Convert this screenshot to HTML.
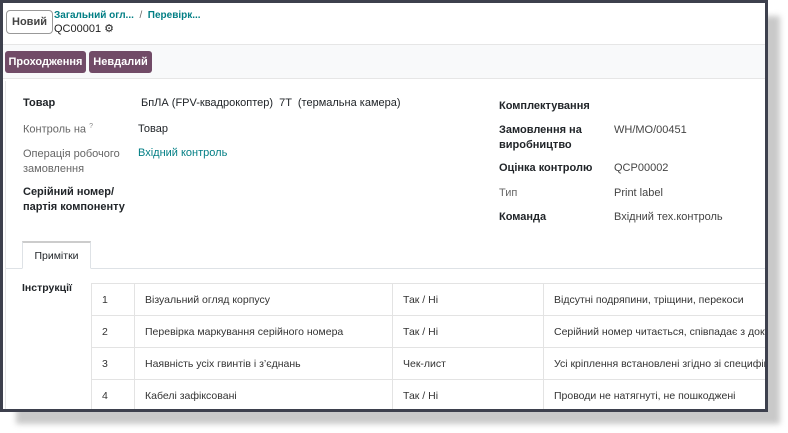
<!DOCTYPE html>
<html><head><meta charset="utf-8"><style>
*{box-sizing:border-box;margin:0;padding:0}
body{width:788px;height:433px;background:#fff;font-family:"Liberation Sans","Noto Sans CJK SC",sans-serif;font-size:11px;color:#212529;position:relative;overflow:hidden}
.shadow{position:absolute;left:16px;top:16px;width:764px;height:408px;background:#c9c9c9;filter:blur(3px)}
.frame{position:absolute;left:0;top:0;width:768px;height:412px;border:3px solid #3d404d;background:#fff;overflow:hidden}
.abs{position:absolute;white-space:nowrap}
.btn{position:absolute;background:#714b67;color:#fff;border-radius:3px;font-size:11px;font-weight:bold;line-height:22px;text-align:center}
.lbl{font-weight:bold;color:#212529}
.mut{color:#666}
.link{color:#017e84}
table{position:absolute;left:88px;top:280px;border-collapse:collapse;table-layout:fixed;width:700px}
td{border:1px solid #e3e3e3;height:32px;padding:0 10px;font-size:10.5px;color:#333;white-space:nowrap;overflow:hidden}
</style></head><body>
<div class="shadow"></div>
<div class="frame">
 <div class="abs" style="left:3px;top:7px;width:47px;height:24px;border:1px solid #999;border-radius:4px;text-align:center;line-height:22px;font-size:11px;color:#444;background:#fff;font-weight:bold">Новий</div>
 <div class="abs link" style="left:51px;top:7px;font-size:10px;font-weight:bold">Загальний огл... &nbsp;<span style="color:#666;font-weight:normal">/</span>&nbsp; Перевірк...</div>
 <div class="abs" style="left:51px;top:19px;font-size:11px;color:#222">QC00001 <span style="font-size:11px">⚙</span></div>
 <div class="abs" style="left:0;top:41px;width:770px;height:35px;background:#f8f9fa;border-top:1px solid #e6e6e6;border-bottom:1px solid #e6e6e6"></div>
 <div class="btn" style="left:2px;top:48px;width:81px">Проходження</div>
 <div class="btn" style="left:86px;top:48px;width:63px">Невдалий</div>
 <div class="abs" style="left:2px;top:78px;width:770px;height:340px;border-left:1px solid #e6e6e6"></div>
 <div class="abs lbl" style="left:20px;top:94px">Товар</div>
 <div class="abs" style="left:138px;top:94px">БпЛА (FPV-квадрокоптер) &nbsp;7T &nbsp;(термальна камера)</div>
 <div class="abs mut" style="left:20px;top:120px">Контроль на <sup style="font-size:7px;color:#888">?</sup></div>
 <div class="abs" style="left:135px;top:120px">Товар</div>
 <div class="abs mut" style="left:20px;top:144px;line-height:15px">Операція робочого<br>замовлення</div>
 <div class="abs link" style="left:135px;top:144px">Вхідний контроль</div>
 <div class="abs lbl" style="left:20px;top:182px;line-height:15px">Серійний номер/<br>партія компоненту</div>
 <div class="abs lbl" style="left:496px;top:97px">Комплектування</div>
 <div class="abs lbl" style="left:496px;top:120px;line-height:15px">Замовлення на<br>виробництво</div>
 <div class="abs" style="left:611px;top:121px;color:#444">WH/MO/00451</div>
 <div class="abs lbl" style="left:496px;top:159px">Оцінка контролю</div>
 <div class="abs" style="left:611px;top:159px;color:#444">QCP00002</div>
 <div class="abs mut" style="left:496px;top:184px">Тип</div>
 <div class="abs" style="left:611px;top:184px;color:#444">Print label</div>
 <div class="abs lbl" style="left:496px;top:208px">Команда</div>
 <div class="abs" style="left:611px;top:208px;color:#444">Вхідний тех.контроль</div>
 <div class="abs" style="left:3px;top:265px;width:770px;border-top:1px solid #dee2e6"></div>
 <div class="abs" style="left:19px;top:238px;width:69px;height:28px;border:1px solid #dee2e6;border-bottom:1px solid #fff;border-top:2px solid #ccc;background:#fff;text-align:center;line-height:26px;font-size:10.5px">Примітки</div>
 <div class="abs lbl" style="left:19px;top:279px;font-size:10.5px">Інструкції</div>
 <table>
  <colgroup><col style="width:43px"><col style="width:258px"><col style="width:151px"><col style="width:248px"></colgroup>
  <tr><td>1</td><td>Візуальний огляд корпусу</td><td>Так / Ні</td><td>Відсутні подряпини, тріщини, перекоси</td></tr>
  <tr><td>2</td><td>Перевірка маркування серійного номера</td><td>Так / Ні</td><td>Серійний номер читається, співпадає з докум</td></tr>
  <tr><td>3</td><td>Наявність усіх гвинтів і з’єднань</td><td>Чек-лист</td><td>Усі кріплення встановлені згідно зі специфіка</td></tr>
  <tr><td>4</td><td>Кабелі зафіксовані</td><td>Так / Ні</td><td>Проводи не натягнуті, не пошкоджені</td></tr>
 </table>
</div>
</body></html>
